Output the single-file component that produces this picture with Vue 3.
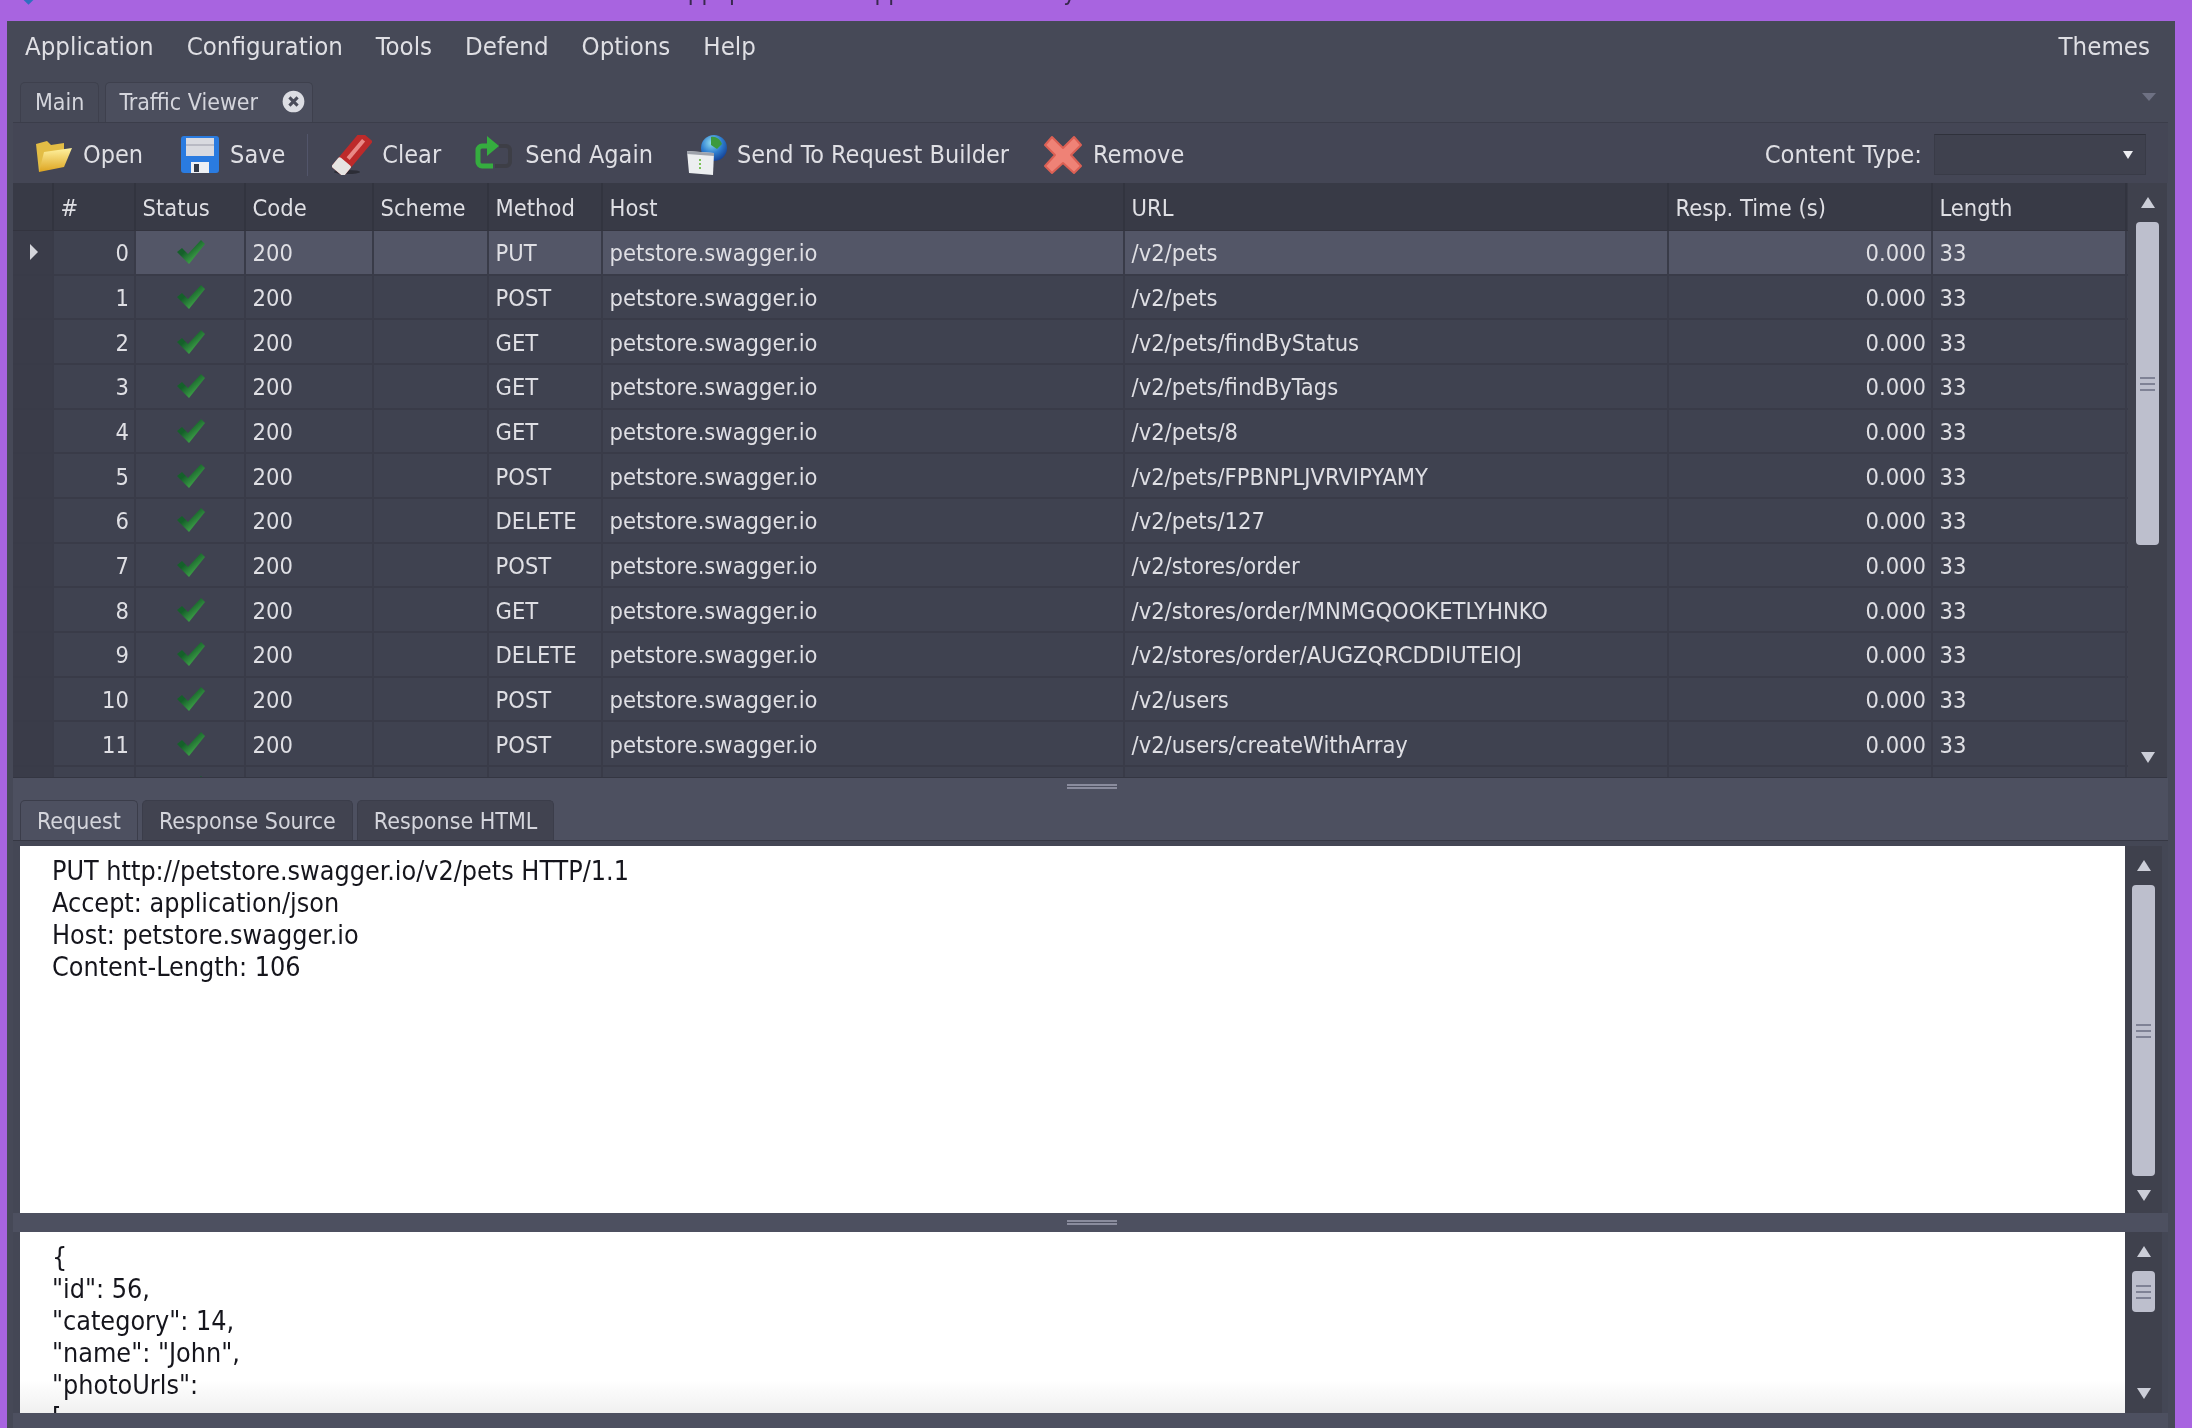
<script setup>
const menus = ['Application', 'Configuration', 'Tools', 'Defend', 'Options', 'Help']

const columns = [
  { key: 'head', label: '' },
  { key: 'id', label: '#' },
  { key: 'status', label: 'Status' },
  { key: 'code', label: 'Code' },
  { key: 'scheme', label: 'Scheme' },
  { key: 'method', label: 'Method' },
  { key: 'host', label: 'Host' },
  { key: 'url', label: 'URL' },
  { key: 'time', label: 'Resp. Time (s)' },
  { key: 'length', label: 'Length' }
]

const rows = [
  ['PUT', '/v2/pets'],
  ['POST', '/v2/pets'],
  ['GET', '/v2/pets/findByStatus'],
  ['GET', '/v2/pets/findByTags'],
  ['GET', '/v2/pets/8'],
  ['POST', '/v2/pets/FPBNPLJVRVIPYAMY'],
  ['DELETE', '/v2/pets/127'],
  ['POST', '/v2/stores/order'],
  ['GET', '/v2/stores/order/MNMGQOOKETLYHNKO'],
  ['DELETE', '/v2/stores/order/AUGZQRCDDIUTEIOJ'],
  ['POST', '/v2/users'],
  ['POST', '/v2/users/createWithArray']
]

const requestLines = [
  'PUT http://petstore.swagger.io/v2/pets HTTP/1.1',
  'Accept: application/json',
  'Host: petstore.swagger.io',
  'Content-Length: 106'
]

const bodyLines = ['{', '"id": 56,', '"category": 14,', '"name": "John",', '"photoUrls":', '[']
</script>

<template>
  <div class="screen">
    <div class="titlebar">
      <i class="app-icon"></i>
      <span class="title-text">AppSpider - Web Application Security Scanner</span>
    </div>

    <div class="window">
      <div class="menubar">
        <span v-for="m in menus" :key="m" class="menu-item">{{ m }}</span>
        <span class="menu-item themes">Themes</span>
      </div>

      <div class="doc-tabs">
        <div class="doc-tab">Main</div>
        <div class="doc-tab active">
          Traffic Viewer
          <svg class="close" viewBox="0 0 18 18">
            <circle cx="9" cy="9" r="8.5" fill="#dcdde3" />
            <path d="M5.8 5.8l6.4 6.4M12.2 5.8l-6.4 6.4" stroke="#4a4c5a" stroke-width="2.4" />
          </svg>
        </div>
        <span class="tabs-arrow"></span>
      </div>

      <div class="panel">
        <div class="toolbar">
          <div class="tool first">
            <svg class="icon" viewBox="0 0 40 40">
              <defs>
                <linearGradient id="fold" x1="0" y1="0" x2="0" y2="1">
                  <stop offset="0" stop-color="#fff2a0" />
                  <stop offset="1" stop-color="#dda41f" />
                </linearGradient>
              </defs>
              <path d="M3 9l11-3 4 4 13-2v7L6 37z" fill="#e3bd45" />
              <path d="M6 37l5-20 28-4-8 19z" fill="url(#fold)" />
            </svg>
            <span>Open</span>
          </div>
          <div class="tool">
            <svg class="icon" viewBox="0 0 40 40">
              <rect x="1" y="1" width="38" height="37" rx="3" fill="#2a7be0" />
              <rect x="6" y="3" width="28" height="18" fill="#d9dae0" />
              <rect x="6" y="9" width="28" height="2" fill="#b9bac4" />
              <rect x="11" y="27" width="18" height="11" fill="#eef0f4" />
              <rect x="14" y="29" width="5" height="8" fill="#333a48" />
            </svg>
            <span>Save</span>
          </div>
          <div class="separator"></div>
          <div class="tool">
            <svg class="icon" viewBox="0 0 40 40">
              <ellipse cx="15" cy="37" rx="13" ry="2" fill="#2c2d36" />
              <g transform="rotate(-50 20 19)">
                <rect x="-3" y="11" width="46" height="16" rx="2" fill="#bd2a2a" />
                <rect x="-3" y="11" width="13" height="16" rx="2" fill="#e6e4e2" />
                <rect x="14" y="17" width="24" height="4" fill="#e98a86" />
              </g>
            </svg>
            <span>Clear</span>
          </div>
          <div class="tool">
            <svg class="icon" viewBox="0 0 40 40">
              <path d="M24 11h7a4 4 0 0 1 4 4v12a4 4 0 0 1-4 4h-11" fill="none" stroke="#3d3e46" stroke-width="4" />
              <path d="M14 11H7a4 4 0 0 0-4 4v12a4 4 0 0 0 4 4h11" fill="none" stroke="#35ad3f" stroke-width="5" />
              <path d="M12 1l12 10-12 10z" fill="#35ad3f" />
            </svg>
            <span>Send Again</span>
          </div>
          <div class="tool">
            <svg class="icon" viewBox="0 0 40 40">
              <defs>
                <radialGradient id="globe" cx="0.4" cy="0.3" r="0.8">
                  <stop offset="0" stop-color="#8fdcf0" />
                  <stop offset="0.5" stop-color="#2f7fd0" />
                  <stop offset="1" stop-color="#0f3488" />
                </radialGradient>
              </defs>
              <circle cx="27" cy="13" r="13" fill="url(#globe)" />
              <path d="M24 2c5-1 9 2 11 7l-5 5-6-4z" fill="#3c9a3e" />
              <path d="M0 16l27 2-1 22-24-2z" fill="#eceef0" />
              <path d="M0 16l27 2v3L0 19z" fill="#9ea2ab" />
              <path d="M13 24v11" stroke="#7cc25a" stroke-width="2" stroke-dasharray="2 2" />
            </svg>
            <span>Send To Request Builder</span>
          </div>
          <div class="tool">
            <svg class="icon" viewBox="0 0 40 40">
              <path d="M9 2l11 11L31 2l7 8-10 10 10 11-7 7-11-10L9 38l-7-7 10-11L2 10z" fill="#ef8276" stroke="#dc6054" stroke-width="2" stroke-linejoin="round" />
            </svg>
            <span>Remove</span>
          </div>

          <div class="content-type">
            <span>Content Type:</span>
            <div class="combo"><i class="arrow-down small"></i></div>
          </div>
        </div>

        <div class="table-area">
          <div class="grid">
            <div class="row header">
              <div v-for="c in columns" :key="c.key" class="cell">{{ c.label }}</div>
            </div>
            <div v-for="(r, i) in rows" :key="i" class="row" :class="{ selected: i === 0 }">
              <div class="cell head"><i v-if="i === 0" class="row-mark"></i></div>
              <div class="cell num">{{ i }}</div>
              <div class="cell check">
                <svg viewBox="0 0 28 24" class="check-icon">
                  <defs>
                    <linearGradient :id="'chk' + i" x1="0" y1="0" x2="1" y2="1">
                      <stop offset="0.38" stop-color="#15602a" />
                      <stop offset="0.72" stop-color="#3d9f47" />
                    </linearGradient>
                  </defs>
                  <path d="M0 12l5-4 6 6L24 0l4 4-16 20z" :fill="'url(#chk' + i + ')'" />
                </svg>
              </div>
              <div class="cell">200</div>
              <div class="cell"></div>
              <div class="cell">{{ r[0] }}</div>
              <div class="cell">petstore.swagger.io</div>
              <div class="cell">{{ r[1] }}</div>
              <div class="cell num">0.000</div>
              <div class="cell">33</div>
            </div>
            <!-- next row is only just cut off by the splitter -->
            <div class="row">
              <div class="cell head"></div>
              <div class="cell"></div>
              <div class="cell check">
                <svg viewBox="0 0 28 24" class="check-icon">
                  <path d="M0 12l5-4 6 6L24 0l4 4-16 20z" fill="#15602a" />
                </svg>
              </div>
              <div class="cell"></div>
              <div class="cell"></div>
              <div class="cell"></div>
              <div class="cell"></div>
              <div class="cell"></div>
              <div class="cell"></div>
              <div class="cell"></div>
            </div>
          </div>
          <div class="scrollbar">
            <div class="sb-btn"><i class="arrow-up"></i></div>
            <div class="thumb thumb-table"><i class="grip"></i></div>
            <div class="sb-space"></div>
            <div class="sb-btn"><i class="arrow-down"></i></div>
          </div>
        </div>

        <div class="lower">
          <div class="splitter first"><i class="split-grip"></i></div>
          <div class="sub-tabs">
            <div class="sub-tab active">Request</div>
            <div class="sub-tab">Response Source</div>
            <div class="sub-tab">Response HTML</div>
          </div>
          <div class="pane request">
            <div class="text-box">
              <div v-for="l in requestLines" :key="l">{{ l }}</div>
            </div>
            <div class="scrollbar">
              <div class="sb-btn"><i class="arrow-up"></i></div>
              <div class="thumb thumb-request"><i class="grip"></i></div>
              <div class="sb-btn"><i class="arrow-down"></i></div>
            </div>
          </div>
          <div class="splitter second"><i class="split-grip"></i></div>
          <div class="pane body">
            <div class="text-box fade">
              <div v-for="l in bodyLines" :key="l">{{ l }}</div>
            </div>
            <div class="scrollbar">
              <div class="sb-btn"><i class="arrow-up"></i></div>
              <div class="thumb thumb-body"><i class="grip"></i></div>
              <div class="sb-space"></div>
              <div class="sb-btn"><i class="arrow-down"></i></div>
            </div>
          </div>
        </div>
      </div>
    </div>
  </div>
</template>

<style>
html, body {
  margin: 0;
  background: #a864e0;
}
</style>

<style scoped>
.screen {
  width: 2192px;
  height: 1428px;
  overflow: hidden;
  background: #a864e0;
  font-family: "DejaVu Sans Condensed", "DejaVu Sans", sans-serif;
  font-stretch: condensed;
  font-size: 23.5px;
  color: #dfdfe4;
  filter: blur(0.5px);
}

.titlebar {
  height: 21px;
  overflow: hidden;
  padding-left: 673px;
  box-sizing: border-box;
  color: #38284e;
  font-size: 24px;
  position: relative;
}

.app-icon {
  position: absolute;
  left: 24px;
  top: -6px;
  width: 9px;
  height: 9px;
  background: #2f6fc0;
  transform: rotate(45deg);
}

.title-text {
  display: block;
  margin-top: -22px;
  line-height: 28px;
  white-space: nowrap;
}

.window {
  width: 2168px;
  margin-left: 7px;
  height: 1407px;
  background: #464957;
  display: flex;
  flex-direction: column;
}

.menubar {
  height: 61px;
  box-sizing: border-box;
  display: flex;
  align-items: center;
  padding: 0 25px 12px 18px;
  gap: 33px;
  font-size: 25.6px;
}

.themes {
  margin-left: auto;
}

.doc-tabs {
  height: 40px;
  display: flex;
  align-items: stretch;
  gap: 6px;
  padding-left: 13px;
  position: relative;
  font-size: 23px;
}

.doc-tab {
  padding: 0 14px 2px;
  display: flex;
  align-items: center;
  border: 1px solid #3e404d;
  border-bottom: none;
  border-radius: 5px 5px 0 0;
  color: #d4d5dc;
}

.doc-tab.active {
  background: #4b4e5d;
  width: 208px;
  box-sizing: border-box;
  justify-content: space-between;
  padding: 0 7px 2px 13px;
}

.close {
  width: 23px;
  height: 23px;
}

.tabs-arrow {
  position: absolute;
  right: 19px;
  top: 11px;
  border-left: 7px solid transparent;
  border-right: 7px solid transparent;
  border-top: 8px solid #6e7183;
}

.panel {
  margin: 0 7px 0 6px;
  flex: 1;
  display: flex;
  flex-direction: column;
  border-top: 1px solid #3b3d4a;
  min-height: 0;
}

.toolbar {
  height: 60px;
  box-sizing: border-box;
  display: flex;
  align-items: center;
  padding: 3px 0 0 20px;
  background: #444655;
  font-size: 25px;
}

.tool {
  display: flex;
  align-items: center;
  gap: 10px;
  margin-right: 34px;
}

.tool.first {
  margin-right: 37px;
}

.icon {
  width: 40px;
  height: 40px;
  flex: none;
}

.separator {
  width: 1px;
  height: 42px;
  background: #52556a;
  margin: 0 24px 0 -12px;
}

.content-type {
  margin-left: auto;
  margin-right: 22px;
  display: flex;
  align-items: center;
  gap: 12px;
  font-size: 25.3px;
}

.combo {
  width: 212px;
  height: 41px;
  box-sizing: border-box;
  background: #3f414e;
  border: 1px solid #393b47;
  border-top-color: #2f313b;
  display: flex;
  align-items: center;
  justify-content: flex-end;
  padding-right: 12px;
}

.table-area {
  height: 595px;
  display: flex;
  background: #3f4250;
  border-bottom: 1px solid #343642;
  box-sizing: border-box;
  margin-right: 1px;
}

.grid {
  flex: 1;
  overflow: hidden;
  min-width: 0;
}

.row {
  display: grid;
  grid-template-columns: 41px 82px 110px 128px 115px 114px 522px 544px 264px 194px;
  height: 44.67px;
  box-sizing: border-box;
  border-bottom: 2px solid #393b48;
  background: #3f4250;
}

.row.header {
  height: 48px;
  background: #383a46;
  border-bottom: 1px solid #33343f;
}

.cell {
  display: flex;
  align-items: center;
  padding: 2px 7px 0 6.5px;
  border-right: 2px solid #393b48;
  overflow: hidden;
  white-space: nowrap;
  min-width: 0;
}

.header .cell {
  border-right-color: #32343f;
}

.cell.head {
  background: #3a3c49;
  padding: 0 0 0 3px;
  justify-content: center;
}

.cell.num {
  justify-content: flex-end;
  padding-right: 5px;
}

.cell.check {
  justify-content: center;
  padding: 0 0 0 2px;
}

.check-icon {
  width: 28px;
  height: 24px;
}

.selected .cell {
  background: #535667;
}

.selected .cell.head {
  background: #3a3c49;
}

.selected .cell.num:nth-child(2) {
  background: #3f4250;
}

.row-mark {
  border-left: 8px solid #d5d6dc;
  border-top: 8px solid transparent;
  border-bottom: 8px solid transparent;
}

.scrollbar {
  width: 39px;
  flex: none;
  background: #3f414d;
  display: flex;
  flex-direction: column;
  align-items: center;
}

.sb-btn {
  height: 39px;
  flex: none;
  display: flex;
  align-items: center;
  justify-content: center;
}

.sb-space {
  flex: 1;
}

.thumb {
  width: 23px;
  flex: none;
  background: #bdbfcd;
  border-radius: 4px;
  display: flex;
  align-items: center;
  justify-content: center;
}

.thumb-table {
  height: 323px;
}

.thumb-request {
  height: 291px;
}

.thumb-body {
  height: 41px;
}

.grip {
  width: 15px;
  height: 10px;
  border-top: 2px solid #7f8295;
  border-bottom: 2px solid #7f8295;
  background: linear-gradient(#7f8295, #7f8295) center / 100% 2px no-repeat;
}

.arrow-up {
  border-left: 7px solid transparent;
  border-right: 7px solid transparent;
  border-bottom: 11px solid #ccced8;
}

.arrow-down {
  border-left: 7px solid transparent;
  border-right: 7px solid transparent;
  border-top: 11px solid #ccced8;
}

.arrow-down.small {
  border-left-width: 5px;
  border-right-width: 5px;
  border-top: 8px solid #eeeef2;
}

.lower {
  flex: 1;
  background: #4d5060;
  display: flex;
  flex-direction: column;
  min-height: 0;
}

.splitter {
  display: flex;
  justify-content: center;
  flex: none;
  padding-left: 2px;
}

.splitter.first {
  height: 22px;
  padding-top: 6px;
  box-sizing: border-box;
}

.splitter.second {
  height: 19px;
  padding-top: 7px;
  box-sizing: border-box;
}

.split-grip {
  width: 50px;
  height: 5px;
  border-top: 2px solid #8a8c9d;
  border-bottom: 2px solid #8a8c9d;
  box-sizing: border-box;
}

.sub-tabs {
  height: 40px;
  flex: none;
  display: flex;
  gap: 4px;
  padding-left: 7px;
  font-size: 23px;
}

.sub-tab {
  display: flex;
  align-items: center;
  padding: 0 16px;
  background: #414350;
  border: 1px solid #3b3d4a;
  border-bottom: none;
  border-radius: 5px 5px 0 0;
  color: #d4d5dc;
}

.sub-tab.active {
  background: #4d5060;
}

.pane {
  display: flex;
  flex: none;
  padding: 0 6px 0 7px;
  background: #444755;
  overflow: hidden;
}

.pane .scrollbar {
  width: 37px;
}

.pane.request {
  height: 373px;
  padding-top: 5px;
  box-sizing: border-box;
  border-top: 1px solid #363844;
}

.pane.body {
  height: 181px;
}

.text-box {
  flex: 1;
  min-width: 0;
  background: #fff;
  color: #15151c;
  padding: 9px 0 0 32px;
  line-height: 32px;
  font-size: 26.7px;
  overflow: hidden;
}

.text-box.fade {
  background: linear-gradient(#fff 82%, #f0f0f0);
}
</style>
